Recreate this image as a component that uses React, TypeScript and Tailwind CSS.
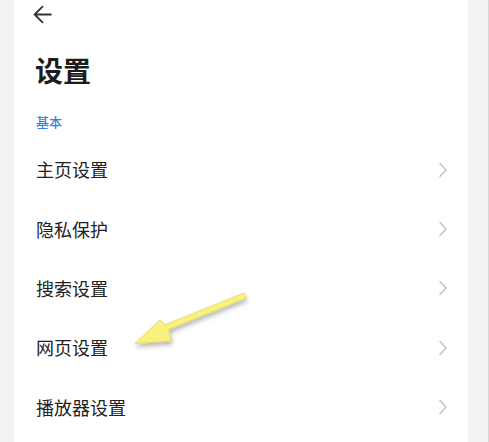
import React from "react";

const items = ["主页设置", "隐私保护", "搜索设置", "网页设置", "播放器设置"];

function Chevron() {
  return (
    <svg width="10" height="16" viewBox="0 0 10 16" fill="none">
      <path d="M2 1.5 L8 8 L2 14.5" stroke="#c4c4c4" strokeWidth="1.6" strokeLinecap="round" strokeLinejoin="round" />
    </svg>
  );
}

export default function App() {
  return (
    <div
      className="relative w-[489px] h-[442px] overflow-hidden bg-[#f2f2f2] flex"
      style={{ fontFamily: '"Noto Sans CJK SC", "Noto Sans", sans-serif' }}
    >
      <div className="ml-[14px] w-[454px] h-full bg-white pl-[22px] pr-[20px] flex flex-col">
        <div className="h-[28px] pt-[4px] -ml-[4px]">
          <svg width="21" height="21" viewBox="0 0 20 20" fill="none">
            <path d="M18 10 H3 M10 2.5 L2.5 10 L10 17.5" stroke="#333" strokeWidth="1.7" strokeLinecap="round" strokeLinejoin="round" />
          </svg>
        </div>
        <div className="mt-[14px] h-[56px] leading-[56px] text-[28px] font-bold text-[#1c1c1c] -ml-[1px]">设置</div>
        <div className="mt-[14px] h-[20px] leading-[20px] text-[13px] font-medium text-[#3b7fdb]">基本</div>
        <div className="mt-[8px] flex flex-col">
          {items.map((t) => (
            <div key={t} className="h-[59.4px] flex items-center justify-between">
              <span className="text-[18px] text-[#222]">{t}</span>
              <Chevron />
            </div>
          ))}
        </div>
      </div>
      <div className="w-[20px] h-full bg-[#f3f3f3]" />
      <div className="absolute right-0 top-0 w-[1px] h-full bg-[#d8d8d8]" />
      <svg className="absolute left-0 top-0" width="489" height="442" viewBox="0 0 489 442">
        <defs>
          <filter id="sh" x="-20%" y="-20%" width="140%" height="140%">
            <feDropShadow dx="1" dy="3" stdDeviation="2.5" floodColor="#000" floodOpacity="0.3" />
          </filter>
        </defs>
        <g filter="url(#sh)">
          <path d="M244 293 L246 298 L168.5 329.5 L171 341 L135 343.5 L160 320 L164.5 325 Z" fill="#f8f27c" stroke="#e0d860" strokeWidth="0.8" strokeLinejoin="round" />
        </g>
      </svg>
    </div>
  );
}
